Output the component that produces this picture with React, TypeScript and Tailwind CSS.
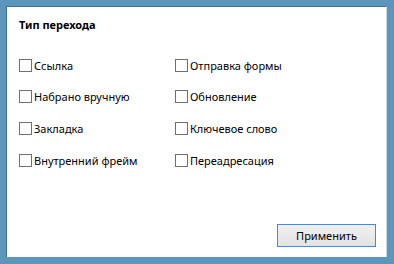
import React from 'react';

const left = ['Ссылка', 'Набрано вручную', 'Закладка', 'Внутренний фрейм'];
const right = ['Отправка формы', 'Обновление', 'Ключевое слово', 'Переадресация'];

function Check({ label }: { label: string }) {
  return (
    <label className="flex items-center h-[13px] gap-[2px]">
      <span className="w-[13px] h-[13px] border border-[#707070] bg-white shrink-0" />
      <span className="text-[11px] leading-none text-black">{label}</span>
    </label>
  );
}

function Column({ items, className }: { items: string[]; className?: string }) {
  return (
    <div className={`flex flex-col ${className ?? ''}`}>
      <Check label={items[0]} />
      <div className="mt-[18px]">
        <Check label={items[1]} />
      </div>
      <div className="mt-[19px]">
        <Check label={items[2]} />
      </div>
      <div className="mt-[19px]">
        <Check label={items[3]} />
      </div>
    </div>
  );
}

export default function App() {
  return (
    <div className="w-[394px] h-[264px] bg-[#5c96bb] pt-[6px] pl-[6px] pr-[7px] pb-[7px]" style={{ fontFamily: '"Noto Sans", "Open Sans", sans-serif' }}>
      <div className="h-full border-t border-l border-r border-[#3f6e8e] border-r-[#c9d6df] bg-white flex flex-col pl-[12px] pr-[10px]">
        <div className="pt-[10px] text-[11px] font-bold leading-[16px] text-black">Тип перехода</div>
        <div className="mt-[26px] flex">
          <Column items={left} className="w-[156px]" />
          <Column items={right} />
        </div>
        <div className="flex-1" />
        <div className="flex justify-end pb-[10px]">
          <button className="w-[99px] h-[23px] border border-[#3c8ce6] bg-gradient-to-b from-[#f0f0f0] to-[#e3e3e3] text-[11px] text-black leading-none">
            Применить
          </button>
        </div>
      </div>
    </div>
  );
}
